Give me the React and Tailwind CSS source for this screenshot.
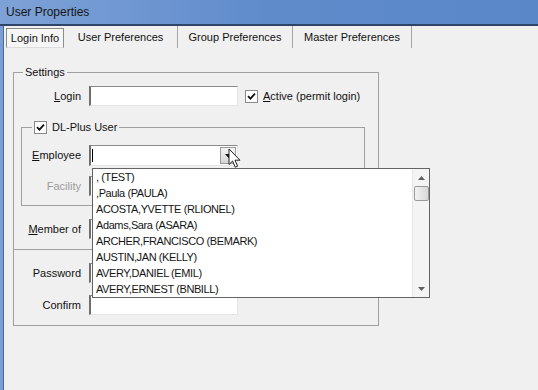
import React from 'react';

const font = { fontFamily: '"Liberation Sans", Arial, sans-serif' };

const employees = [
  ', (TEST)',
  ',Paula (PAULA)',
  'ACOSTA,YVETTE (RLIONEL)',
  'Adams,Sara (ASARA)',
  'ARCHER,FRANCISCO (BEMARK)',
  'AUSTIN,JAN (KELLY)',
  'AVERY,DANIEL (EMIL)',
  'AVERY,ERNEST (BNBILL)',
];

function CheckBox() {
  return (
    <span className="w-[13px] h-[13px] border border-[#8a8a8a] bg-white flex items-center justify-center shrink-0">
      <svg width="9" height="9" viewBox="0 0 9 9">
        <path d="M1 4.2 L3.4 6.6 L8 1.6" fill="none" stroke="#111" strokeWidth="1.8" />
      </svg>
    </span>
  );
}

function TextBox({ className = '' }) {
  return (
    <div
      className={`w-[149px] h-[20px] bg-white border border-t-[#8a8a8a] border-l-[#6f6f6f] border-l-2 border-r-[#e5e5e5] border-b-[#e5e5e5] ${className}`}
    />
  );
}

function Label({ children, width, grey }) {
  return (
    <div
      className={`text-[11px] text-right mr-[8px] shrink-0 ${grey ? 'text-[#9b9b9b]' : 'text-[#111]'}`}
      style={{ width }}
    >
      {children}
    </div>
  );
}

function Cursor() {
  return (
    <svg className="absolute left-[228px] top-[148px]" width="14" height="22" viewBox="0 0 14 22">
      <path
        d="M1 1 L1 16.5 L4.6 13 L7.2 19.2 L9.6 18.2 L7 12.2 L12 12.2 Z"
        fill="#fff"
        stroke="#222"
        strokeWidth="1"
        strokeLinejoin="round"
      />
    </svg>
  );
}

function DropList() {
  return (
    <div className="absolute left-[92px] top-[168px] w-[338px] h-[130px] bg-white border border-[#646464] flex">
      <div className="flex-1 flex flex-col pl-[3px] tracking-[-0.4px]">
        {employees.map((name) => (
          <div key={name} className="h-[16px] leading-[16px] text-[11px] text-[#151515]">
            {name}
          </div>
        ))}
      </div>
      <div className="w-[17px] bg-[#f4f4f4] border-l border-[#e6e6e6] flex flex-col items-center">
        <div className="h-[17px] flex items-center justify-center">
          <svg width="7" height="4" viewBox="0 0 7 4">
            <path d="M0 4 L3.5 0 L7 4 Z" fill="#606060" />
          </svg>
        </div>
        <div className="w-[15px] h-[15px] rounded-[2px] border border-[#9a9a9a] bg-gradient-to-r from-[#f2f2f2] to-[#d8d8d8]" />
        <div className="flex-1" />
        <div className="h-[17px] flex items-center justify-center">
          <svg width="7" height="4" viewBox="0 0 7 4">
            <path d="M0 0 L3.5 4 L7 0 Z" fill="#606060" />
          </svg>
        </div>
      </div>
    </div>
  );
}

export default function App() {
  const tabs = [
    { name: 'User Preferences', w: 'w-[114px]' },
    { name: 'Group Preferences', w: 'w-[115px]' },
    { name: 'Master Preferences', w: 'w-[119px]' },
  ];

  return (
    <div className="relative w-[538px] h-[390px] bg-[#f0f0f0] flex flex-col overflow-hidden" style={font}>
      {/* title bar */}
      <div className="h-[26px] shrink-0 bg-gradient-to-r from-[#7ea2d7] via-[#5f8bcb] to-[#5987c8] border-b-2 border-b-[#2f4466] flex items-center pl-[6px]">
        <span className="text-[12px] text-[#161616]">User Properties</span>
      </div>

      <div className="flex-1 flex">
        <div className="w-[4px] bg-[#7a9ed6] border-r border-[#4d6a96]" />

        <div className="flex-1 flex flex-col">
          {/* tabs */}
          <div className="flex items-end h-[22px] pl-[2px]">
            <div className="w-[58px] h-[20px] border border-[#8c8c8c] border-b-[#dcdcdc] bg-[#f6f6f6] flex items-center justify-center text-[11px] text-[#111]">
              Login Info
            </div>
            {tabs.map((t) => (
              <div
                key={t.name}
                className={`${t.w} h-[22px] border-r border-[#a5a5a5] flex items-center justify-center text-[11px] text-[#111]`}
              >
                {t.name}
              </div>
            ))}
          </div>

          {/* settings */}
          <fieldset className="ml-[9px] mt-[18px] w-[366px] border border-[#a0a0a0] pb-[10px]">
            <legend className="ml-[9px] px-[2px] text-[11px] leading-[13px] text-[#111]">Settings</legend>

            <div className="flex items-center mt-[7px]">
              <Label width={67}>
                <span className="underline">L</span>ogin
              </Label>
              <TextBox />
              <div className="ml-[7px] flex items-center">
                <CheckBox />
                <span className="ml-[5px] text-[11px] text-[#111]">
                  <span className="underline">A</span>ctive (permit login)
                </span>
              </div>
            </div>

            <fieldset className="ml-[7px] mt-[15px] w-[344px] border border-[#a0a0a0] pb-[9px]">
              <legend className="ml-[10px] px-[2px] flex items-center leading-[13px]">
                <CheckBox />
                <span className="ml-[5px] text-[11px] text-[#111]">DL-Plus User</span>
              </legend>

              <div className="flex items-center mt-[11px]">
                <Label width={59}>
                  <span className="underline">E</span>mployee
                </Label>
                <div className="w-[149px] h-[21px] bg-white border border-t-[#8a8a8a] border-l-[#6f6f6f] border-l-2 border-r-[#e5e5e5] border-b-[#e5e5e5] flex items-center">
                  <div className="ml-[1px] w-px h-[13px] bg-black" />
                  <div className="flex-1" />
                  <div className="w-[16px] h-[17px] mr-px border border-[#9a9a9a] bg-gradient-to-b from-[#f5f5f5] to-[#d6d6d6] flex items-center justify-center">
                    <svg width="7" height="4" viewBox="0 0 7 4">
                      <path d="M0 0 L3.5 4 L7 0 Z" fill="#111" />
                    </svg>
                  </div>
                </div>
              </div>

              <div className="flex items-center mt-[10px]">
                <Label width={59} grey>
                  Facility
                </Label>
                <TextBox />
              </div>
            </fieldset>

            <div className="flex items-center mt-[13px]">
              <Label width={67}>
                <span className="underline">M</span>ember of
              </Label>
              <TextBox />
            </div>

            <div className="mt-[10px] h-px bg-[#a0a0a0]" />

            <div className="flex items-center mt-[13px]">
              <Label width={67}>Password</Label>
              <TextBox />
            </div>

            <div className="flex items-center mt-[12px]">
              <Label width={67}>Confirm</Label>
              <TextBox />
            </div>
          </fieldset>
        </div>
      </div>

      <DropList />
      <Cursor />
    </div>
  );
}
